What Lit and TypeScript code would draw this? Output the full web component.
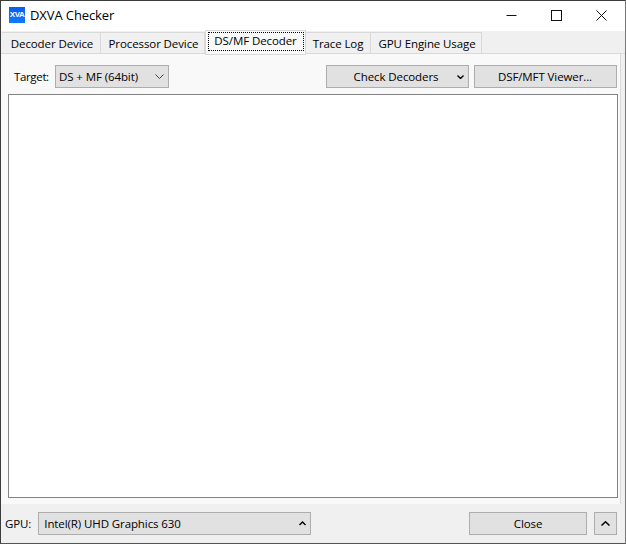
import { LitElement, html, css } from "lit";
import { customElement } from "lit/decorators.js";

const chevDown = html`<svg width="9" height="5" viewBox="0 0 9 5"><path d="M.5.500 4.500 4.500 8.500.500" fill="none" stroke="#444" stroke-width="1"/></svg>`;
const smallDown = html`<svg width="7" height="4" viewBox="0 0 7 4"><path d="M.5.500 3.500 3.500 6.500.500" fill="none" stroke="#000" stroke-width="1.400"/></svg>`;
const smallUp = html`<svg width="7" height="5" viewBox="0 0 7 5"><path d="M.5 4 3.500 1 6.500 4" fill="none" stroke="#000" stroke-width="1.400"/></svg>`;
const wideUp = html`<svg width="9" height="5" viewBox="0 0 9 5"><path d="M.5 4.500 4.500.800 8.500 4.500" fill="none" stroke="#000" stroke-width="1.500"/></svg>`;

@customElement("app-root")
export class AppRoot extends LitElement {
  static styles = css`
    :host {
      display: block;
      width: 626px;
      height: 544px;
      font-family: "Open Sans", "Noto Sans", sans-serif;
      font-size: 11.5px;
      letter-spacing: -0.1px;
      color: #000;
      overflow: hidden;
    }
    .window {
      box-sizing: border-box;
      width: 626px;
      height: 544px;
      border: 1px solid #3c3c3c;
      border-bottom-color: #555;
      border-right-color: #777;
      background: #f0f0f0;
      display: flex;
      flex-direction: column;
    }
    .titlebar {
      box-sizing: border-box;
      height: 30px;
      padding-bottom: 2px;
      background: #fff;
      display: flex;
      align-items: center;
      flex: none;
    }
    .logo {
      width: 16px;
      height: 16px;
      margin-left: 8px;
      background: linear-gradient(#0a5cf0, #0a7cff);
      color: #fff;
      font-family: "Liberation Sans", sans-serif;
      font-size: 8px;
      font-weight: 700;
      line-height: 15px;
      text-align: center;
      letter-spacing: -0.5px;
      white-space: nowrap;
      overflow: hidden;
    }
    .title {
      font-size: 13px;
      letter-spacing: -0.1px;
      margin-left: 5px;
      flex: 1;
    }
    .controls {
      display: flex;
      padding-right: 1px;
    }
    .wc {
      width: 45px;
      height: 28px;
      display: flex;
      align-items: center;
      justify-content: center;
    }
    .tabs {
      height: 22px;
      flex: none;
      display: flex;
      padding-left: 1px;
      border-bottom: 1px solid #d9d9d9;
      box-sizing: content-box;
    }
    .tab {
      box-sizing: border-box;
      height: 22px;
      margin-top: 1px;
      border: 1px solid #d9d9d9;
      border-left: none;
      background: #f0f0f0;
      display: flex;
      align-items: center;
      justify-content: center;
      white-space: nowrap;
    }
    .t1 { width: 99px; padding-left: 2px; }
    .t2 { width: 104px; padding-left: 2px; }
    .t3 { width: 101px; }
    .t4 { width: 65px; }
    .t5 { width: 111px; padding-left: 2px; }
    .tab.active {
      margin-top: -1px;
      height: 25px;
      background: #f9f9f9;
      border-left: 1px solid #d9d9d9;
      position: relative;
      z-index: 1;
      padding-bottom: 3px;
    }
    .tab.active span {
      outline: 1px dotted #000;
      outline-offset: -1px;
      width: 96px;
      height: 19px;
      box-sizing: border-box;
      text-align: center;
      line-height: 18px;
    }
    .panel {
      flex: 1;
      background: #f9f9f9;
      margin-right: 4px;
      border-right: 1px solid #d9d9d9;
      display: flex;
      flex-direction: column;
      padding: 11px 0 0 7px;
      min-height: 0;
    }
    .toolbar {
      display: flex;
      align-items: center;
      height: 23px;
      padding-right: 3px;
    }
    .lbl { margin-left: 6px; width: 41px; letter-spacing: -0.35px; }
    .ctl {
      box-sizing: border-box;
      height: 23px;
      border: 1px solid #adadad;
      background: #e1e1e1;
      display: flex;
      align-items: center;
    }
    .target { width: 114px; padding: 0 4px 0 3px; justify-content: space-between; }
    .spacer { flex: 1; }
    .check { width: 143px; margin-right: 5px; position: relative; justify-content: center; padding-right: 3px; }
    .check svg { position: absolute; right: 4px; top: 9px; }
    .viewer { width: 143px; justify-content: center; padding-right: 1px; }
    .list {
      flex: 1;
      margin: 6px 0;
      background: #fff;
      border: 1px solid #848484;
      width: 610px;
      box-sizing: border-box;
    }
    .bottom {
      height: 39px;
      flex: none;
      display: flex;
      align-items: center;
      padding: 0 8px 0 4px;
    }
    .gpulbl { margin-right: 7px; }
    .gpu { width: 273px; padding: 0 4px 0 5px; justify-content: space-between; }
    .close { width: 118px; justify-content: center; margin-right: 7px; }
    .up { width: 23px; justify-content: center; }
  `;

  render() {
    return html`
      <div class="window">
        <div class="titlebar">
          <div class="logo">XVA</div>
          <div class="title">DXVA Checker</div>
          <div class="controls">
            <div class="wc"><svg width="11" height="11" viewBox="0 0 11 11"><path d="M.5 5.500h10" stroke="#111" /></svg></div>
            <div class="wc"><svg width="11" height="11" viewBox="0 0 11 11"><rect x=".5" y=".5" width="10" height="10" fill="none" stroke="#111"/></svg></div>
            <div class="wc"><svg width="11" height="11" viewBox="0 0 11 11"><path d="M.5.500l10 10M10.500.500l-10 10" stroke="#111" fill="none"/></svg></div>
          </div>
        </div>
        <div class="tabs">
          <div class="tab t1">Decoder Device</div>
          <div class="tab t2">Processor Device</div>
          <div class="tab t3 active"><span>DS/MF Decoder</span></div>
          <div class="tab t4">Trace Log</div>
          <div class="tab t5">GPU Engine Usage</div>
        </div>
        <div class="panel">
          <div class="toolbar">
            <span class="lbl">Target:</span>
            <div class="ctl target"><span>DS + MF (64bit)</span>${chevDown}</div>
            <div class="spacer"></div>
            <div class="ctl check"><span>Check Decoders</span>${smallDown}</div>
            <div class="ctl viewer">DSF/MFT Viewer...</div>
          </div>
          <div class="list"></div>
        </div>
        <div class="bottom">
          <span class="gpulbl">GPU:</span>
          <div class="ctl gpu"><span>Intel(R) UHD Graphics 630</span>${smallUp}</div>
          <div class="spacer"></div>
          <div class="ctl close">Close</div>
          <div class="ctl up">${wideUp}</div>
        </div>
      </div>
    `;
  }
}
